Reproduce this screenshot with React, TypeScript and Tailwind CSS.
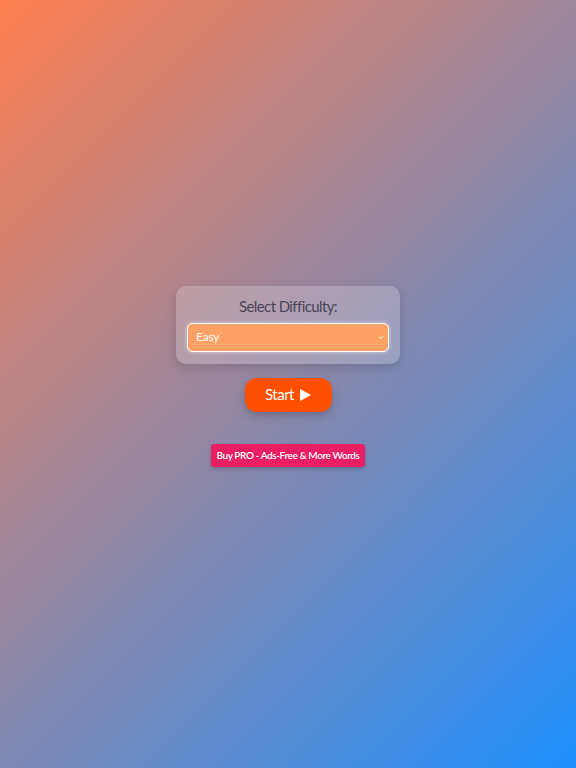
import React from "react";

export default function App() {
  return (
    <div
      className="w-full min-h-screen flex flex-col items-center justify-center pb-[16px] bg-[linear-gradient(135deg,#ff7f50,#1e90ff)]"
      style={{ fontFamily: 'Lato, "Noto Sans", sans-serif' }}
    >
      <div className="w-[224px] h-[78px] rounded-[10px] bg-white/20 shadow-[0_4px_12px_rgba(0,0,0,0.15)] flex flex-col items-center pt-[10px]">
        <div className="text-[15px] leading-[20px] tracking-[-0.6px] text-[#4a4458]">Select Difficulty:</div>
        <div className="relative mt-[7px] w-[202px] h-[29px] rounded-[6px] border border-white bg-[#ffa064] shadow-[0_0_4px_rgba(255,255,255,0.5)] flex items-center pl-[8px]">
          <span className="text-[12px] tracking-[-0.2px] text-white">Easy</span>
          <svg className="absolute right-[4px] top-[11px]" width="6" height="5" viewBox="0 0 6 5">
            <path d="M1 1.5 L3 3.5 L5 1.5" stroke="white" strokeWidth="1" fill="none" />
          </svg>
        </div>
      </div>
      <button className="mt-[14px] w-[87px] h-[34px] rounded-[12px] bg-[#ff4f00] shadow-[0_4px_10px_rgba(0,0,0,0.2)] flex items-center justify-center gap-[6px] text-white text-[15px] tracking-[-0.5px]">
        <span>Start</span>
        <svg width="11" height="12" viewBox="0 0 11 12">
          <path d="M0 0 L11 6 L0 12 Z" fill="white" />
        </svg>
      </button>
      <button className="mt-[32px] w-[154px] h-[23px] rounded-[3px] bg-[#e91e63] shadow-[0_2px_4px_rgba(0,0,0,0.2)] flex items-center justify-center whitespace-nowrap text-white text-[10px] tracking-[-0.4px] font-semibold">
        Buy PRO - Ads-Free &amp; More Words
      </button>
    </div>
  );
}
